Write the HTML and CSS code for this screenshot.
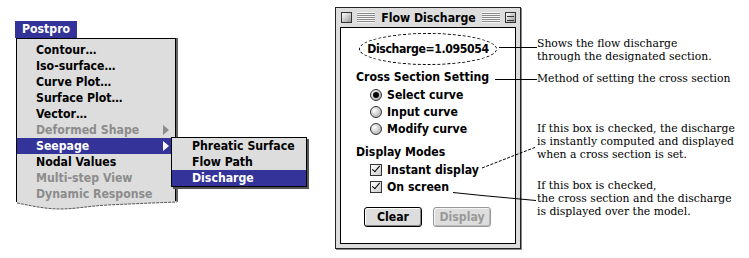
FILE: index.html
```html
<!DOCTYPE html>
<html lang="en">

<head>
    <meta charset="UTF-8">
    <title>Postpro - Flow Discharge</title>
    <link rel="stylesheet" href="styles.css">
</head>

<body>
    <div class="figure">
        <div class="menus">
            <div class="menu-title">Postpro</div>
            <div class="menu">
                <div class="item">Contour…</div>
                <div class="item">Iso-surface…</div>
                <div class="item">Curve Plot…</div>
                <div class="item">Surface Plot…</div>
                <div class="item">Vector…</div>
                <div class="item disabled sub">Deformed Shape</div>
                <div class="item active sub">Seepage</div>
                <div class="item">Nodal Values</div>
                <div class="item disabled">Multi-step View</div>
                <div class="item disabled">Dynamic Response</div>

                <svg class="torn" width="162" height="10" viewBox="0 0 162 10">
                    <path d="M1 0 L1 2 C12 4 28 8 44 8 C60 8 72 5 92 4 C112 3 135 2 161 1 L161 0 Z" fill="#dddddd"/>
                    <path d="M1 2 C12 4 28 8 44 8 C60 8 72 5 92 4 C112 3 135 2 161 1" fill="none" stroke="#555" stroke-width="1" stroke-dasharray="3 1"/>
                </svg>

                <div class="submenu">
                    <div class="item">Phreatic Surface</div>
                    <div class="item">Flow Path</div>
                    <div class="item active">Discharge</div>
                </div>
            </div>
        </div>

        <div class="window">
            <div class="titlebar">
                <span class="close-box"></span>
                <span class="stripes"></span>
                <span class="title">Flow Discharge</span>
                <span class="stripes"></span>
                <span class="zoom-box"></span>
            </div>
            <div class="content">
                <div class="readout">Discharge=1.095054</div>

                <div class="heading first">Cross Section Setting</div>
                <div class="option"><span class="radio on"></span>Select curve</div>
                <div class="option"><span class="radio"></span>Input curve</div>
                <div class="option"><span class="radio"></span>Modify curve</div>

                <div class="heading">Display Modes</div>
                <div class="option"><span class="check"></span>Instant display</div>
                <div class="option"><span class="check"></span>On screen</div>

                <div class="buttons">
                    <button class="btn">Clear</button>
                    <button class="btn" disabled>Display</button>
                </div>
            </div>
        </div>

        <div class="notes">
            <p class="note n1">Shows the flow discharge<br>through the designated section.</p>
            <p class="note n2">Method of setting the cross section</p>
            <p class="note n3">If this box is checked, the discharge<br>is instantly computed and displayed<br>when a cross section is set.</p>
            <p class="note n4">If this box is checked,<br>the cross section and the discharge<br>is displayed over the model.</p>
        </div>

        <!-- leader lines from the dialog to the notes -->
        <svg class="leaders" width="749" height="258">
            <line x1="499" y1="47.5" x2="537" y2="47.5" stroke="#000"/>
            <line x1="495" y1="79.5" x2="537" y2="79.5" stroke="#000"/>
            <line x1="482" y1="168" x2="536" y2="147" stroke="#000" stroke-dasharray="3 1.5"/>
            <polyline points="453,192.5 482,195.5 536,200.5" fill="none" stroke="#000"/>
        </svg>
    </div>
</body>

</html>
```

FILE: styles.css
```css
body {
    margin: 0;
    background: #fff;
    color: #000;
}

.figure {
    position: relative;
    display: flex;
    width: 749px;
    height: 258px;
    overflow: hidden;
}

/* ---------- menu ---------- */

.menus {
    width: 335px;
    padding: 21px 0 0 15px;
    box-sizing: border-box;
    font-family: "DejaVu Sans Condensed", "DejaVu Sans", sans-serif;
    font-stretch: condensed;
    font-weight: bold;
    font-size: 12.2px;
}

.menu-title {
    display: inline-block;
    height: 17px;
    line-height: 17px;
    padding: 0 7px 0 7px;
    background: #333399;
    color: #fff;
}

.menu {
    position: relative;
    width: 160px;
    margin-left: 1px;
    padding-top: 3px;
    box-sizing: border-box;
    background: #dddddd;
    border: 1px solid #000;
    border-bottom: none;
    box-shadow: 2px 0 0 #666;
}

.item {
    position: relative;
    height: 16px;
    line-height: 16px;
    padding-left: 19px;
    white-space: nowrap;
}

.item.disabled {
    color: #8c8c8c;
}

.item.active {
    background: #333399;
    color: #fff;
}

.item.sub::after {
    content: "";
    position: absolute;
    right: 6px;
    top: 3px;
    border-left: 6px solid #8c8c8c;
    border-top: 5px solid transparent;
    border-bottom: 5px solid transparent;
}

.item.active.sub::after {
    border-left-color: #fff;
}

.torn {
    position: absolute;
    left: -1px;
    bottom: -9px;
}

.submenu {
    position: absolute;
    left: 154px;
    top: 98px;
    width: 136px;
    box-sizing: border-box;
    background: #dddddd;
    border: 1px solid #000;
    box-shadow: 2px 2px 0 #555;
}

.submenu .item {
    padding-left: 20px;
}

/* ---------- window ---------- */

.window {
    width: 186px;
    height: 242px;
    margin-top: 7px;
    box-sizing: border-box;
    border: 1px solid #222;
    background: #dddddd;
    box-shadow: 1px 1px 0 #888;
    padding: 0 4px 4px 4px;
    display: flex;
    flex-direction: column;
    font-family: "DejaVu Sans Condensed", "DejaVu Sans", sans-serif;
    font-stretch: condensed;
    font-weight: bold;
    font-size: 12.2px;
}

.titlebar {
    height: 19px;
    display: flex;
    align-items: center;
    gap: 5px;
    padding: 0 0 0 1px;
}

.close-box,
.zoom-box {
    position: relative;
    width: 11px;
    height: 11px;
    box-sizing: border-box;
    border: 1px solid #333;
    background: linear-gradient(135deg, #fff, #999);
    flex: none;
}

.zoom-box::after {
    content: "";
    position: absolute;
    left: 1px;
    right: 1px;
    top: 3px;
    height: 3px;
    border-top: 1px solid #333;
    border-bottom: 1px solid #333;
}

.stripes {
    flex: 1;
    height: 11px;
    background: repeating-linear-gradient(to bottom, #f6f6f6 0 1px, #8a8a8a 1px 2px);
}

.title {
    padding: 0 1px;
    white-space: nowrap;
}

.content {
    flex: 1;
    background: #fff;
    border: 1px solid #000;
}

.readout {
    width: 138px;
    height: 32px;
    margin: 5px auto 0;
    box-sizing: border-box;
    border: 1px dashed #000;
    border-radius: 50%;
    line-height: 30px;
    text-align: center;
    letter-spacing: -0.4px;
}

.heading {
    height: 17px;
    line-height: 17px;
    padding-left: 15px;
    margin-top: 7px;
}

.heading.first {
    margin-top: 4px;
}

.option {
    display: flex;
    align-items: center;
    gap: 5px;
    height: 17px;
    padding-left: 29px;
}

.radio {
    width: 12px;
    height: 12px;
    box-sizing: border-box;
    border: 1px solid #333;
    border-radius: 50%;
    background: radial-gradient(circle at 35% 35%, #fff, #bbb 70%, #888);
    position: relative;
}

.radio.on::after {
    content: "";
    position: absolute;
    left: 2px;
    top: 2px;
    width: 6px;
    height: 6px;
    border-radius: 50%;
    background: #000;
}

.check {
    width: 12px;
    height: 12px;
    box-sizing: border-box;
    border: 1px solid #333;
    background: linear-gradient(135deg, #fff, #ccc);
    position: relative;
}

.check::after {
    content: "";
    position: absolute;
    left: 3px;
    top: -1px;
    width: 3px;
    height: 7px;
    border-right: 1.5px solid #000;
    border-bottom: 1.5px solid #000;
    transform: rotate(40deg);
}

.buttons {
    display: flex;
    gap: 11px;
    margin-top: 12px;
    padding-left: 23px;
}

.btn {
    width: 58px;
    height: 20px;
    padding: 0;
    border: 1px solid #000;
    border-radius: 3px;
    background: #dddddd;
    box-shadow: inset 1px 1px 0 #fff, inset -1px -1px 0 #888;
    font: inherit;
    color: #000;
}

.btn:disabled {
    border-color: #999;
    color: #999;
    box-shadow: inset 1px 1px 0 #f4f4f4, inset -1px -1px 0 #bbb;
}

/* ---------- notes ---------- */

.notes {
    margin-left: 16px;
    font-family: "DejaVu Serif", serif;
    font-size: 10.8px;
    line-height: 13px;
    color: #000;
}

.note {
    margin: 0;
    white-space: nowrap;
}

.n1 {
    margin-top: 37px;
}

.n2 {
    margin-top: 9px;
}

.n3 {
    margin-top: 37px;
}

.n4 {
    margin-top: 18px;
}

.leaders {
    position: absolute;
    left: 0;
    top: 0;
    pointer-events: none;
}
```
